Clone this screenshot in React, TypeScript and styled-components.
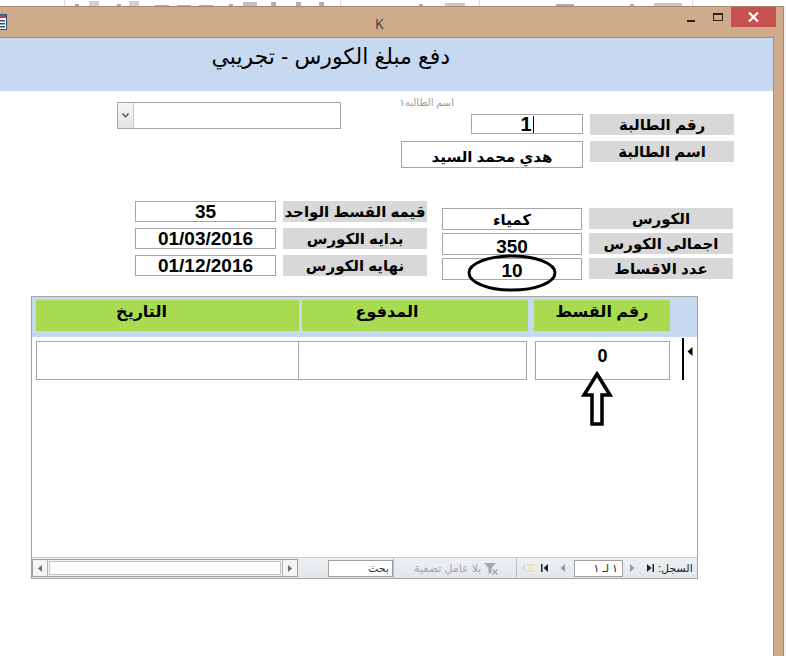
import React from 'react';
import styled, { createGlobalStyle } from 'styled-components';

const FONT = '"Liberation Sans", "DejaVu Sans", Arial, sans-serif';

const GlobalStyle = createGlobalStyle`
  html, body {
    margin: 0;
    padding: 0;
    background: #ffffff;
  }
  body {
    font-family: ${FONT};
  }
`;

// bits of the office ribbon peeking above the window
const ribbonMarks = [
  { gap: 64, w: 1, h: 6, c: '#dcdcdc' },
  { gap: 10, w: 4, h: 2, c: '#a8a8a8' },
  { gap: 10, w: 10, h: 5, c: '#d0d0d0' },
  { gap: 18, w: 4, h: 2, c: '#a8a8a8' },
  { gap: 8, w: 10, h: 5, c: '#d0d0d0' },
  { gap: 16, w: 14, h: 1, c: '#b0b0b0' },
  { gap: 8, w: 14, h: 1, c: '#b0b0b0' },
  { gap: 8, w: 14, h: 1, c: '#b0b0b0' },
  { gap: 16, w: 4, h: 2, c: '#a8a8a8' },
  { gap: 10, w: 14, h: 4, c: '#c0c0c0' },
  { gap: 14, w: 5, h: 4, c: '#b0b0b0' },
  { gap: 20, w: 5, h: 4, c: '#b0b0b0' },
  { gap: 18, w: 5, h: 4, c: '#b0b0b0' },
  { gap: 16, w: 1, h: 6, c: '#dcdcdc' },
  { gap: 78, w: 4, h: 2, c: '#b0b0b0' },
  { gap: 22, w: 20, h: 3, c: '#c8c8c8' },
  { gap: 14, w: 1, h: 6, c: '#dcdcdc' },
  { gap: 76, w: 18, h: 2, c: '#b0b0b0' },
  { gap: 56, w: 4, h: 2, c: '#b0b0b0' },
  { gap: 20, w: 28, h: 3, c: '#c8c8c8' },
  { gap: 10, w: 1, h: 6, c: '#dcdcdc' },
];

function App() {
  return (
    <>
      <GlobalStyle />
      <Screen>
        <RibbonStrip>
          {ribbonMarks.map((m, i) => (
            <RibbonMark key={i} $gap={m.gap} $w={m.w} $h={m.h} $c={m.c} />
          ))}
        </RibbonStrip>

        <Window>
          <TitleBar>
            <AppIcon width='16' height='16' viewBox='0 0 16 16'>
              <rect x='0.5' y='0.5' width='15' height='15' fill='#fff' stroke='#2d4f7c' />
              <rect x='1' y='1' width='14' height='3' fill='#c8385c' />
              <rect x='9' y='6' width='5' height='1.5' fill='#2d4f7c' />
              <rect x='9' y='9' width='5' height='1.5' fill='#2d4f7c' />
              <rect x='9' y='12' width='5' height='1.5' fill='#2d4f7c' />
            </AppIcon>
            <WindowTitle>K</WindowTitle>
            <Spacer />
            <MinimizeBtn />
            <MaximizeBtn />
            <CloseBtn>
              <svg width='11' height='10' viewBox='0 0 11 10'>
                <path d='M1 0.5 L10 9.5 M10 0.5 L1 9.5' stroke='#fff' strokeWidth='2.2' />
              </svg>
            </CloseBtn>
          </TitleBar>

          <Body>
            <Content>
              <FormHeader>
                <FormTitle dir='rtl'>دفع مبلغ الكورس - تجريبي</FormTitle>
              </FormHeader>

              <TopSection>
                <Combo>
                  <ComboButton>
                    <svg width='7' height='5' viewBox='0 0 7 5'>
                      <path d='M0.5 0.5 L3.5 3.8 L6.5 0.5' stroke='#444' fill='none' strokeWidth='1.2' />
                    </svg>
                  </ComboButton>
                  <ComboField />
                </Combo>

                <StudentBlock>
                  <SmallCaption dir='rtl'>اسم الطالبة١</SmallCaption>
                  <FieldRow>
                    <Field $w={112} $h={20} $size={20}>
                      1<Caret />
                    </Field>
                    <Caption dir='rtl'>رقم الطالبة</Caption>
                  </FieldRow>
                  <FieldRow $top={6}>
                    <Field $w={182} $h={27} $size={15} $pad={3}>
                      <span dir='rtl'>هدي محمد السيد</span>
                    </Field>
                    <Caption dir='rtl'>اسم الطالبة</Caption>
                  </FieldRow>
                </StudentBlock>
              </TopSection>

              <MiddleSection>
                <FieldGroup $gap={6}>
                  <FieldRow>
                    <Field $w={141}>35</Field>
                    <Caption dir='rtl'>قيمه القسط الواحد</Caption>
                  </FieldRow>
                  <FieldRow>
                    <Field $w={141}>01/03/2016</Field>
                    <Caption dir='rtl'>بدايه الكورس</Caption>
                  </FieldRow>
                  <FieldRow>
                    <Field $w={141}>01/12/2016</Field>
                    <Caption dir='rtl'>نهايه الكورس</Caption>
                  </FieldRow>
                </FieldGroup>

                <FieldGroup $gap={3} $top={7}>
                  <FieldRow>
                    <Field $w={140} $h={22} $size={15}>
                      <span dir='rtl'>كمياء</span>
                    </Field>
                    <Caption dir='rtl'>الكورس</Caption>
                  </FieldRow>
                  <FieldRow>
                    <Field $w={140} $h={22} $pad={4}>350</Field>
                    <Caption dir='rtl'>اجمالي الكورس</Caption>
                  </FieldRow>
                  <FieldRow>
                    <Field $w={140} $h={22} $pad={2}>
                      10
                      <Ring width='90' height='38' viewBox='0 0 90 38'>
                        <ellipse cx='45' cy='19' rx='43' ry='17' fill='none' stroke='#000' strokeWidth='3' />
                      </Ring>
                    </Field>
                    <Caption dir='rtl'>عدد الاقساط</Caption>
                  </FieldRow>
                </FieldGroup>
              </MiddleSection>

              <Subform>
                <GridHeader>
                  <HeadCell $w={263} $shift={52} dir='rtl'>التاريخ</HeadCell>
                  <HeadCell $w={226} $shift={56} $gap={3} dir='rtl'>المدفوع</HeadCell>
                  <HeadCell $w={136} $gap={6} dir='rtl'>رقم القسط</HeadCell>
                </GridHeader>

                <GridBody>
                  <DataRow>
                    <DataCell $w={263} />
                    <DataCell $w={229} $gap={-1} />
                    <DataCell $w={135} $gap={8}>0</DataCell>
                    <RowSelector>
                      <svg width='6' height='9' viewBox='0 0 6 9'>
                        <path d='M5.5 0 L0.5 4.5 L5.5 9 Z' fill='#000' />
                      </svg>
                    </RowSelector>
                  </DataRow>

                  <UpArrow width='32' height='56' viewBox='0 0 32 56'>
                    <path
                      d='M16 3 L29 24 L21 24 L21 53 L11 53 L11 24 L3 24 Z'
                      fill='#fff'
                      stroke='#000'
                      strokeWidth='3.5'
                      strokeLinejoin='miter'
                    />
                  </UpArrow>
                </GridBody>

                <NavBar>
                  <HScroll>
                    <ScrollButton>
                      <svg width='4' height='7' viewBox='0 0 4 7'>
                        <path d='M4 0 L0 3.5 L4 7 Z' fill='#707070' />
                      </svg>
                    </ScrollButton>
                    <ScrollTrack />
                    <ScrollButton $right>
                      <svg width='4' height='7' viewBox='0 0 4 7'>
                        <path d='M0 0 L4 3.5 L0 7 Z' fill='#707070' />
                      </svg>
                    </ScrollButton>
                  </HScroll>

                  <SearchBox dir='rtl'>بحث</SearchBox>
                  <Divider />

                  <FilterGroup>
                    <FilterText dir='rtl'>بلا عامل تصفية</FilterText>
                    <svg width='16' height='13' viewBox='0 0 16 13'>
                      <path d='M1 1 L13 1 L8.5 6 L8.5 11 L5.5 12 L5.5 6 Z' fill='#a8a8a8' />
                      <path d='M9.5 7.5 L14.5 12.5 M14.5 7.5 L9.5 12.5' stroke='#a8a8a8' strokeWidth='1.5' />
                    </svg>
                  </FilterGroup>
                  <Divider />

                  <NavIcon $gap={4} $w={13}>
                    <svg width='13' height='8' viewBox='0 0 13 8'>
                      <path d='M4 0.5 L0.5 4 L4 7.5 Z' fill='#d8d8d8' />
                      <g fill='#e9d98a'>
                        <rect x='6' y='0' width='2' height='2' />
                        <rect x='10' y='0' width='2' height='2' />
                        <rect x='8' y='3' width='2' height='2' />
                        <rect x='6' y='6' width='2' height='2' />
                        <rect x='10' y='6' width='2' height='2' />
                      </g>
                    </svg>
                  </NavIcon>
                  <NavIcon $gap={6} $w={10}>
                    <svg width='8' height='8' viewBox='0 0 8 8'>
                      <rect x='0' y='0' width='1.5' height='8' fill='#222' />
                      <path d='M7 0 L2.5 4 L7 8 Z' fill='#222' />
                    </svg>
                  </NavIcon>
                  <NavIcon $gap={8} $w={8}>
                    <svg width='5' height='8' viewBox='0 0 5 8'>
                      <path d='M5 0 L0.5 4 L5 8 Z' fill='#9a9a9a' />
                    </svg>
                  </NavIcon>
                  <RecordBox dir='rtl'>١ لـ ١</RecordBox>
                  <NavIcon $gap={5} $w={8}>
                    <svg width='5' height='8' viewBox='0 0 5 8'>
                      <path d='M0 0 L4.5 4 L0 8 Z' fill='#9a9a9a' />
                    </svg>
                  </NavIcon>
                  <NavIcon $gap={9} $w={10}>
                    <svg width='8' height='8' viewBox='0 0 8 8'>
                      <path d='M1 0 L5.5 4 L1 8 Z' fill='#222' />
                      <rect x='6.5' y='0' width='1.5' height='8' fill='#222' />
                    </svg>
                  </NavIcon>
                  <RecordLabel dir='rtl'>السجل:</RecordLabel>
                </NavBar>
              </Subform>
            </Content>
            <FrameEdge />
          </Body>
        </Window>
      </Screen>
    </>
  );
}

const Screen = styled.div`
  width: 786px;
  height: 656px;
  overflow: hidden;
  background: #f2f2f2;
  font-family: ${FONT};
  display: flex;
  flex-direction: column;
`;

const RibbonStrip = styled.div`
  height: 6px;
  flex-shrink: 0;
  background: #ffffff;
  display: flex;
  align-items: flex-end;
  overflow: hidden;
`;

const RibbonMark = styled.div<{ $gap: number; $w: number; $h: number; $c: string }>`
  flex-shrink: 0;
  margin-left: ${(p) => p.$gap}px;
  width: ${(p) => p.$w}px;
  height: ${(p) => p.$h}px;
  background: ${(p) => p.$c};
`;

const Window = styled.div`
  width: 784px;
  flex: 1;
  box-sizing: border-box;
  background: #cfab8b;
  border-top: 1px solid #a88a6c;
  border-right: 1px solid #a88a6c;
  display: flex;
  flex-direction: column;
  min-height: 0;
`;

const TitleBar = styled.div`
  height: 30px;
  flex-shrink: 0;
  display: flex;
  align-items: flex-start;
`;

const AppIcon = styled.svg`
  flex-shrink: 0;
  margin-left: -9px;
  margin-top: 7px;
`;

const WindowTitle = styled.div`
  margin-left: 368px;
  margin-top: 7px;
  font-family: "Open Sans", "DejaVu Sans", sans-serif;
  font-size: 14px;
  color: #3a3a3a;
`;

const Spacer = styled.div`
  flex: 1;
`;

const MinimizeBtn = styled.div`
  width: 8px;
  height: 2px;
  margin-top: 13px;
  background: #222;
`;

const MaximizeBtn = styled.div`
  box-sizing: border-box;
  width: 10px;
  height: 8px;
  margin-left: 18px;
  margin-top: 6px;
  border: 1px solid #222;
  border-top-width: 2px;
`;

const CloseBtn = styled.div`
  width: 45px;
  height: 20px;
  margin-left: 8px;
  margin-right: 7px;
  background: #c75050;
  display: flex;
  align-items: center;
  justify-content: center;
`;

const Body = styled.div`
  flex: 1;
  display: flex;
  min-height: 0;
`;

const Content = styled.div`
  width: 774px;
  box-sizing: border-box;
  background: #ffffff;
  border-top: 1px solid #a88a6c;
  border-right: 1px solid #a88a6c;
  display: flex;
  flex-direction: column;
  overflow: hidden;
`;

const FrameEdge = styled.div`
  flex: 1;
`;

const FormHeader = styled.div`
  height: 53px;
  flex-shrink: 0;
  background: #c6d9f0;
`;

const FormTitle = styled.div`
  width: 450px;
  padding-top: 6px;
  text-align: right;
  font-size: 22px;
  color: #000;
`;

const TopSection = styled.div`
  height: 75px;
  flex-shrink: 0;
  margin-top: 5px;
  display: flex;
  align-items: flex-start;
`;

const Combo = styled.div`
  box-sizing: border-box;
  width: 224px;
  height: 27px;
  margin-left: 117px;
  margin-top: 6px;
  border: 1px solid #a5a5a5;
  display: flex;
`;

const ComboButton = styled.div`
  width: 16px;
  box-sizing: border-box;
  border-right: 1px solid #c8c8c8;
  background: linear-gradient(#f6f6f6, #e4e4e4);
  display: flex;
  align-items: center;
  justify-content: center;
`;

const ComboField = styled.div`
  flex: 1;
  background: #fff;
`;

const StudentBlock = styled.div`
  margin-left: 59px;
  width: 334px;
  display: flex;
  flex-direction: column;
`;

const SmallCaption = styled.div`
  width: 54px;
  height: 18px;
  padding-top: 1px;
  box-sizing: border-box;
  text-align: right;
  font-size: 10px;
  color: #9a9a9a;
  white-space: nowrap;
`;

const FieldGroup = styled.div<{ $gap: number; $top?: number }>`
  display: flex;
  flex-direction: column;
  gap: ${(p) => p.$gap}px;
  margin-top: ${(p) => p.$top ?? 0}px;
`;

const FieldRow = styled.div<{ $top?: number }>`
  display: flex;
  justify-content: flex-end;
  align-items: flex-start;
  gap: 7px;
  margin-top: ${(p) => p.$top ?? 0}px;
`;

const Field = styled.div<{ $w: number; $h?: number; $size?: number; $pad?: number }>`
  position: relative;
  box-sizing: border-box;
  width: ${(p) => p.$w}px;
  height: ${(p) => p.$h ?? 21}px;
  padding-top: ${(p) => p.$pad ?? 0}px;
  border: 1px solid #a6a6a6;
  background: #ffffff;
  display: flex;
  align-items: center;
  justify-content: center;
  font-weight: bold;
  font-size: ${(p) => p.$size ?? 19}px;
  line-height: 1;
  color: #000;
  white-space: nowrap;
`;

const Caret = styled.span`
  display: inline-block;
  width: 1px;
  height: 17px;
  margin-left: 1px;
  background: #000;
`;

const Ring = styled.svg`
  position: absolute;
  left: 24px;
  top: -5px;
  pointer-events: none;
`;

const Caption = styled.div`
  box-sizing: border-box;
  width: 144px;
  height: 21px;
  background: #d8d8d8;
  display: flex;
  align-items: center;
  justify-content: center;
  font-weight: bold;
  font-size: 15px;
  line-height: 1;
  color: #000;
  white-space: nowrap;
`;

const MiddleSection = styled.div`
  height: 95px;
  flex-shrink: 0;
  margin-top: 30px;
  padding-left: 135px;
  display: flex;
  align-items: flex-start;
  gap: 15px;
`;

const Subform = styled.div`
  width: 667px;
  height: 283px;
  margin-left: 31px;
  flex-shrink: 0;
  box-sizing: border-box;
  border: 1px solid #a5a5a5;
  display: flex;
  flex-direction: column;
`;

const GridHeader = styled.div`
  height: 40px;
  flex-shrink: 0;
  box-sizing: border-box;
  padding: 3px 0 0 4px;
  background: #c6d9f0;
  display: flex;
  align-items: flex-start;
`;

const HeadCell = styled.div<{ $w: number; $shift?: number; $gap?: number }>`
  box-sizing: border-box;
  width: ${(p) => p.$w}px;
  height: 31px;
  margin-left: ${(p) => p.$gap ?? 0}px;
  padding: 2px ${(p) => p.$shift ?? 0}px 0 0;
  background: #a9db50;
  text-align: center;
  font-weight: bold;
  font-size: 16px;
  color: #000;
`;

const GridBody = styled.div`
  flex: 1;
  position: relative;
  background: #ffffff;
`;

const DataRow = styled.div`
  display: flex;
  align-items: flex-start;
  padding: 1px 0 0 4px;
`;

const DataCell = styled.div<{ $w: number; $gap?: number }>`
  box-sizing: border-box;
  width: ${(p) => p.$w}px;
  height: 39px;
  margin-left: ${(p) => p.$gap ?? 0}px;
  margin-top: 3px;
  padding-top: 4px;
  border: 1px solid #a6a6a6;
  text-align: center;
  font-weight: bold;
  font-size: 18px;
  color: #000;
`;

const RowSelector = styled.div`
  box-sizing: border-box;
  height: 42px;
  margin-left: 12px;
  padding: 4px 0 0 3px;
  border-left: 2px solid #000;
`;

const UpArrow = styled.svg`
  position: absolute;
  left: 549px;
  top: 34px;
`;

const NavBar = styled.div`
  height: 21px;
  flex-shrink: 0;
  box-sizing: border-box;
  background: linear-gradient(#eef0f2, #e4e7ea);
  border-top: 1px solid #c9ced3;
  display: flex;
  align-items: center;
  font-size: 11px;
  color: #222;
`;

const HScroll = styled.div`
  box-sizing: border-box;
  width: 266px;
  height: 18px;
  border: 1px solid #a0a0a0;
  background: #f4f4f4;
  display: flex;
`;

const ScrollButton = styled.div<{ $right?: boolean }>`
  width: 15px;
  box-sizing: border-box;
  display: flex;
  align-items: center;
  justify-content: center;
  ${(p) => (p.$right ? 'border-left: 1px solid #b4b4b4;' : 'border-right: 1px solid #b4b4b4;')}
`;

const ScrollTrack = styled.div`
  flex: 1;
  margin: 1px;
  border: 1px solid #c4c4c4;
  background: #ffffff;
`;

const SearchBox = styled.div`
  box-sizing: border-box;
  width: 65px;
  height: 17px;
  margin-left: 30px;
  padding-right: 3px;
  border: 1px solid #a0a0a0;
  background: #ffffff;
  text-align: right;
  line-height: 15px;
  color: #333;
`;

const Divider = styled.div`
  width: 1px;
  height: 21px;
  background: #b8bcc0;
`;

const FilterGroup = styled.div`
  width: 122px;
  box-sizing: border-box;
  padding: 0 13px 0 20px;
  display: flex;
  align-items: center;
  gap: 2px;
`;

const FilterText = styled.span`
  color: #a6a6a6;
  white-space: nowrap;
`;

const NavIcon = styled.div<{ $gap: number; $w: number }>`
  width: ${(p) => p.$w}px;
  margin-left: ${(p) => p.$gap}px;
  display: flex;
  align-items: center;
  justify-content: center;
`;

const RecordBox = styled.div`
  box-sizing: border-box;
  width: 49px;
  height: 17px;
  margin-left: 8px;
  padding-right: 4px;
  border: 1px solid #a0a0a0;
  background: #ffffff;
  text-align: right;
  line-height: 15px;
`;

const RecordLabel = styled.div`
  margin-left: 3px;
  white-space: nowrap;
`;

export default App;
